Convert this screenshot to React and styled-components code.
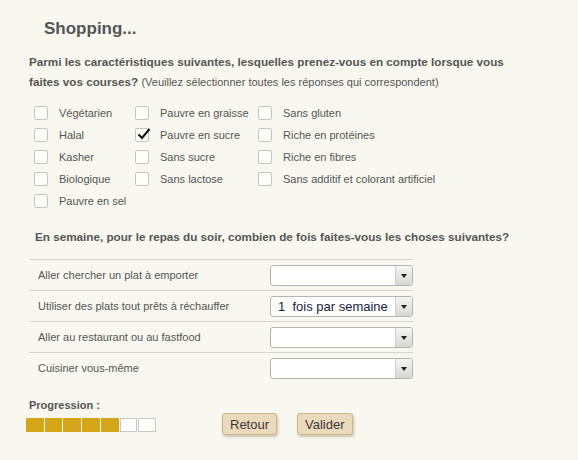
import React from 'react'
import styled, {createGlobalStyle} from 'styled-components'

const Global = createGlobalStyle`
  html, body {
    margin: 0;
    background: #f9f8f0;
  }
  body {
    font-family: "Liberation Sans", Arial, sans-serif;
    color: #555;
  }
`;

const Page = styled.div`
  width: 578px;
  height: 460px;
  padding: 18px 0 0 29px;
  box-sizing: border-box;
`;

const Title = styled.h1`
  margin: 0 0 12px 15px;
  font-size: 17px;
  line-height: 22px;
  font-weight: bold;
  color: #555;
`;

const Question = styled.p`
  margin: 0;
  font-size: 11.7px;
  line-height: 20px;
  font-weight: bold;
  color: #555;
  width: 490px;
  span {
    font-weight: normal;
    font-size: 11px;
  }
`;

const CheckGrid = styled.div`
  display: grid;
  grid-template-columns: 101px 123px auto;
  grid-auto-rows: 22px;
  margin: 10px 0 0 5px;
`;

const CheckItem = styled.label`
  display: flex;
  align-items: center;
  gap: 11px;
  font-size: 11px;
  color: #555;
`;

const Box = styled.span`
  position: relative;
  width: 12px;
  height: 12px;
  border: 1px solid #c4c4c0;
  border-radius: 2px;
  background: #fdfdfb;
  flex-shrink: 0;
  svg {
    position: absolute;
    left: 1px;
    top: -1px;
  }
`;

const SubTitle = styled.h2`
  margin: 17px 0 0 6px;
  font-size: 11.7px;
  line-height: 16px;
  font-weight: bold;
  color: #555;
`;

const Table = styled.div`
  width: 384px;
  margin-top: 14px;
`;

const Row = styled.div`
  display: flex;
  align-items: center;
  justify-content: space-between;
  height: 30px;
  border-top: 1px solid #d6d6cc;
  padding-left: 9px;
  font-size: 11px;
  color: #555;
`;

const Select = styled.div`
  display: flex;
  width: 143px;
  height: 21px;
  box-sizing: border-box;
  border: 1px solid #b4b4b4;
  border-radius: 3px;
  background: #fff;
  overflow: hidden;
  margin-top: 1px;
`;

const SelectValue = styled.div`
  flex: 1;
  padding-left: 7px;
  font-size: 13px;
  line-height: 19px;
  color: #1c1a40;
  white-space: pre;
`;

const Arrow = styled.div`
  width: 16px;
  display: flex;
  align-items: center;
  justify-content: center;
  border-left: 1px solid #d0d0d0;
  background: linear-gradient(#f6f6f6, #d6d6d6);
  &::after {
    content: "";
    border-left: 3.5px solid transparent;
    border-right: 3.5px solid transparent;
    border-top: 4px solid #222;
  }
`;

const Footer = styled.div`
  display: flex;
  align-items: flex-end;
  margin-top: 15px;
`;

const Progress = styled.div`
  width: 180px;
  b {
    display: block;
    font-size: 11px;
    line-height: 14px;
    color: #555;
    margin-bottom: 6px;
  }
`;

const Bar = styled.div`
  display: flex;
  gap: 1px;
  width: 130px;
  margin-left: -3px;
`;

const Cell = styled.span`
  flex: 1;
  height: 12px;
  border: 1px solid;
  background: ${p => (p.$on ? '#d6a61a' : '#fdfdfa')};
  border-color: ${p => (p.$on ? '#d6a61a' : '#c8c8c8')};
`;

const Buttons = styled.div`
  display: flex;
  gap: 20px;
  margin-left: 13px;
  margin-bottom: -3px;
`;

const Button = styled.button`
  height: 22px;
  padding: 0 7px;
  font-family: "Liberation Sans", Arial, sans-serif;
  font-size: 13px;
  color: #3a3a3a;
  background: #ead9ba;
  border: 1px solid #c9b58e;
  border-radius: 3px;
  box-shadow: 1px 2px 3px rgba(120, 100, 60, 0.35);
`;

const Check = () => (
  <svg width="14" height="12" viewBox="0 0 14 12">
    <path d="M1.5 6.5 L5 10 L12.5 1" fill="none" stroke="#111" strokeWidth="2" />
  </svg>
);

const options = [
  ['Végétarien', false], ['Pauvre en graisse', false], ['Sans gluten', false],
  ['Halal', false], ['Pauvre en sucre', true], ['Riche en protéines', false],
  ['Kasher', false], ['Sans sucre', false], ['Riche en fibres', false],
  ['Biologique', false], ['Sans lactose', false], ['Sans additif et colorant artificiel', false],
  ['Pauvre en sel', false],
];

const rows = [
  ['Aller chercher un plat à emporter', ''],
  ['Utiliser des plats tout prêts à réchauffer', '1  fois par semaine'],
  ['Aller au restaurant ou au fastfood', ''],
  ['Cuisiner vous-même', ''],
];

export default function App() {
  return (
    <Page>
      <Global />
      <Title>Shopping...</Title>
      <Question>
        Parmi les caractéristiques suivantes, lesquelles prenez-vous en compte lorsque vous
        faites vos courses? <span>(Veuillez sélectionner toutes les réponses qui correspondent)</span>
      </Question>
      <CheckGrid>
        {options.map(([label, on]) => (
          <CheckItem key={label}>
            <Box>{on && <Check />}</Box>
            {label}
          </CheckItem>
        ))}
      </CheckGrid>
      <SubTitle>En semaine, pour le repas du soir, combien de fois faites-vous les choses suivantes?</SubTitle>
      <Table>
        {rows.map(([label, value]) => (
          <Row key={label}>
            {label}
            <Select>
              <SelectValue>{value}</SelectValue>
              <Arrow />
            </Select>
          </Row>
        ))}
      </Table>
      <Footer>
        <Progress>
          <b>Progression :</b>
          <Bar>
            {[0, 1, 2, 3, 4, 5, 6].map(i => <Cell key={i} $on={i < 5} />)}
          </Bar>
        </Progress>
        <Buttons>
          <Button>Retour</Button>
          <Button>Valider</Button>
        </Buttons>
      </Footer>
    </Page>
  )
}
